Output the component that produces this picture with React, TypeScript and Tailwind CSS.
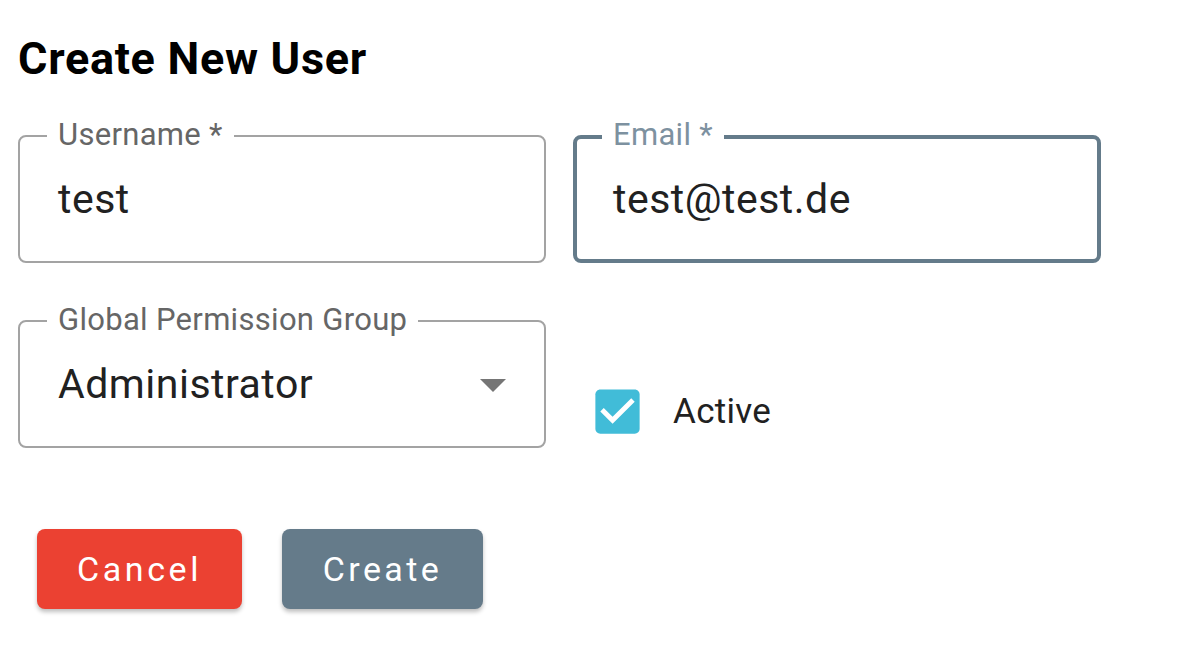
import React from 'react';

function OutlinedField({
  label,
  value,
  focused = false,
  select = false,
}: {
  label: string;
  value: string;
  focused?: boolean;
  select?: boolean;
}) {
  return (
    <div
      className={
        'relative flex items-center w-[528px] h-[128px] rounded-[8px] ' +
        (focused ? 'border-[4px] border-[#647b8a] pl-[36px]' : 'border-[2px] border-[#a3a3a3] pl-[38px]')
      }
    >
      {/* floating label sits over the top border */}
      <span
        className={
          'absolute px-[11px] bg-white text-[31px] leading-none tracking-[0.3px] ' +
          (focused ? 'top-[-20px] left-[25px] text-[#7d91a0]' : 'top-[-18px] left-[27px] text-[#666666]')
        }
      >
        {label}
      </span>
      <span className="text-[41px] leading-none text-[#212121] tracking-[0.5px]">{value}</span>
      {select && (
        <svg className="absolute right-[38px] top-[57px]" width="26" height="13" viewBox="0 0 26 13">
          <polygon points="0,0 26,0 13,13" fill="#757575" />
        </svg>
      )}
    </div>
  );
}

export default function App() {
  return (
    <div
      className="w-full h-[655px] bg-white pl-[18px] pt-[36px]"
      style={{ fontFamily: 'Roboto, "Noto Sans", sans-serif' }}
    >
      <h1 className="text-[45px] leading-[45px] font-bold text-black tracking-[0.7px]">Create New User</h1>

      <div className="flex gap-[27px] mt-[54px]">
        <OutlinedField label="Username *" value="test" />
        <OutlinedField label="Email *" value="test@test.de" focused />
      </div>

      <div className="flex items-start mt-[57px]">
        <OutlinedField label="Global Permission Group" value="Administrator" select />
        <label className="flex items-center ml-[42px] mt-[62px]">
          <svg width="59" height="59" viewBox="0 0 24 24">
            <path
              fill="#41bcd8"
              d="M19 3H5c-1.11 0-2 .9-2 2v14c0 1.1.89 2 2 2h14c1.11 0 2-.9 2-2V5c0-1.1-.89-2-2-2z"
            />
            <path fill="#ffffff" d="M10 17l-5-5 1.41-1.41L10 14.17l7.59-7.59L19 8l-9 9z" />
          </svg>
          <span className="ml-[26px] text-[35px] leading-none text-[#212121] tracking-[0.3px]">Active</span>
        </label>
      </div>

      <div className="flex gap-[40px] ml-[19px] mt-[81px]">
        <button className="w-[205px] h-[80px] rounded-[8px] bg-[#eb4132] text-white text-[34px] font-normal tracking-[3.6px] shadow-[0_3px_4px_rgba(0,0,0,0.25)]">
          Cancel
        </button>
        <button className="w-[201px] h-[80px] rounded-[8px] bg-[#657b8a] text-white text-[34px] font-normal tracking-[3.4px] shadow-[0_3px_4px_rgba(0,0,0,0.25)]">
          Create
        </button>
      </div>
    </div>
  );
}
